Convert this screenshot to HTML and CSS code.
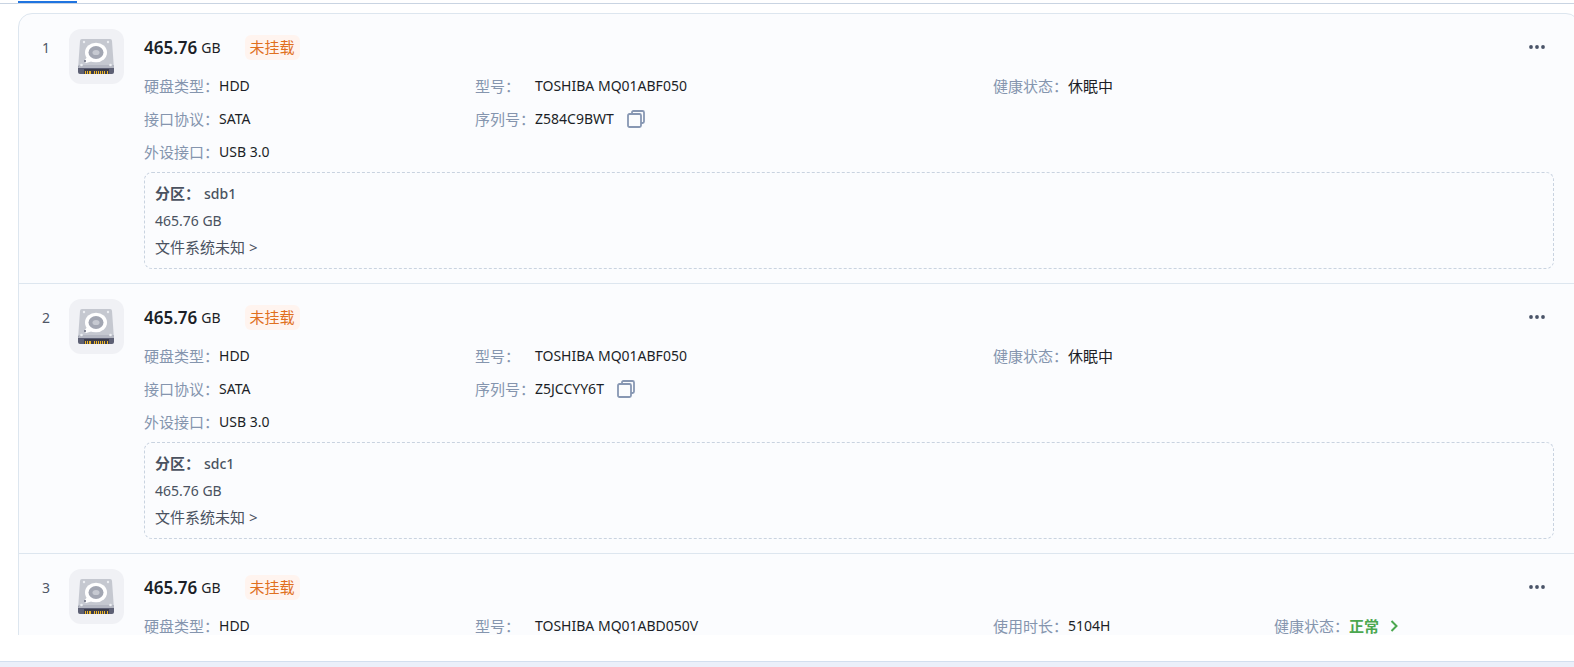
FILE: index.html
```html
<!DOCTYPE html>
<html lang="zh-CN">
<head>
<meta charset="utf-8">
<title>硬盘</title>
<link rel="stylesheet" href="styles.css">
</head>
<body>
<svg class="sprite" aria-hidden="true">
  <symbol id="disk" viewBox="0 0 55 55">
    <path d="M13 10h28q2 0 2 2l2 28H9l2-28q0-2 2-2z" fill="#c5c8d0"/>
    <path d="M9 37l36 0v6q0 2-2 2H11q-2 0-2-2z" fill="#5d6074"/>
    <path d="M9.500 36h35.500l0 3H9z" fill="#b3b6c1"/>
    <path d="M15 40h25v5H15z" fill="#3c3d4b"/>
    <path d="M16.500 42v3M18.500 42v3M20.500 42v3M21.500 42v3M25.500 42v3M27.500 42v3M29.500 42v3M31.500 42v3M33.500 42v3M35.500 42v3M38.500 42v3" stroke="#f0b92c" stroke-width="1"/>
    <path d="M19 27l-4 5 2 2 7-2z" fill="#fff"/>
    <ellipse cx="27" cy="23.500" rx="11" ry="9.800" fill="#fff"/>
    <ellipse cx="27" cy="23.500" rx="7.500" ry="6.500" fill="#a2a6b2"/>
    <ellipse cx="27" cy="23.500" rx="3.500" ry="2.600" fill="#c6c9d1"/>
    <circle cx="16" cy="32" r="1" fill="#5d6074"/>
    <g fill="#eceef2"><circle cx="15" cy="13" r="1.200"/><circle cx="39" cy="13" r="1.200"/><circle cx="12.500" cy="36" r="1.300"/><circle cx="41.500" cy="36" r="1.300"/></g>
  </symbol>
  <symbol id="copy" viewBox="0 0 18 18">
    <path d="M5 4V2.500Q5 1 6.500 1H15.500Q17 1 17 2.500V11.500Q17 13 15.500 13H14" fill="none" stroke="#8797b3" stroke-width="1.800"/>
    <rect x="1" y="4" width="13" height="13" rx="1.500" fill="none" stroke="#8797b3" stroke-width="1.800"/>
  </symbol>
  <symbol id="more" viewBox="0 0 16 4">
    <g fill="#4a5468"><circle cx="2" cy="2" r="1.900"/><circle cx="8" cy="2" r="1.900"/><circle cx="14" cy="2" r="1.900"/></g>
  </symbol>
  <symbol id="chevron" viewBox="0 0 8 12">
    <path d="M1.500 1L6.500 6L1.500 11" fill="none" stroke="#4ba74f" stroke-width="2"/>
  </symbol>
</svg>

<div class="tabs"><span class="tab-active"></span></div>

<main class="viewport">
  <ol class="disk-list">
    <li class="disk">
      <span class="index">1</span>
      <span class="thumb"><svg><use href="#disk"/></svg></span>
      <div class="body">
        <div class="heading"><strong class="size">465.76</strong><span class="unit">GB</span><span class="tag">未挂载</span><button class="more" type="button" aria-label="更多"><svg><use href="#more"/></svg></button></div>
        <div class="specs">
          <dl>
            <div class="spec"><dt>硬盘类型：</dt><dd>HDD</dd></div>
            <div class="spec"><dt>接口协议：</dt><dd>SATA</dd></div>
            <div class="spec"><dt>外设接口：</dt><dd>USB 3.0</dd></div>
          </dl>
          <dl>
            <div class="spec"><dt>型号：</dt><dd>TOSHIBA MQ01ABF050</dd></div>
            <div class="spec"><dt>序列号：</dt><dd>Z584C9BWT</dd><button class="copy" type="button" aria-label="复制"><svg><use href="#copy"/></svg></button></div>
          </dl>
          <dl>
            <div class="spec"><dt>健康状态：</dt><dd class="status">休眠中</dd></div>
          </dl>
        </div>
        <section class="partition">
          <div class="partition-name"><b>分区：</b><span>sdb1</span></div>
          <div class="capacity">465.76 GB</div>
          <a class="fs" href="#">文件系统未知 &gt;</a>
        </section>
      </div>
    </li>
    <li class="disk">
      <span class="index">2</span>
      <span class="thumb"><svg><use href="#disk"/></svg></span>
      <div class="body">
        <div class="heading"><strong class="size">465.76</strong><span class="unit">GB</span><span class="tag">未挂载</span><button class="more" type="button" aria-label="更多"><svg><use href="#more"/></svg></button></div>
        <div class="specs">
          <dl>
            <div class="spec"><dt>硬盘类型：</dt><dd>HDD</dd></div>
            <div class="spec"><dt>接口协议：</dt><dd>SATA</dd></div>
            <div class="spec"><dt>外设接口：</dt><dd>USB 3.0</dd></div>
          </dl>
          <dl>
            <div class="spec"><dt>型号：</dt><dd>TOSHIBA MQ01ABF050</dd></div>
            <div class="spec"><dt>序列号：</dt><dd>Z5JCCYY6T</dd><button class="copy" type="button" aria-label="复制"><svg><use href="#copy"/></svg></button></div>
          </dl>
          <dl>
            <div class="spec"><dt>健康状态：</dt><dd class="status">休眠中</dd></div>
          </dl>
        </div>
        <section class="partition">
          <div class="partition-name"><b>分区：</b><span>sdc1</span></div>
          <div class="capacity">465.76 GB</div>
          <a class="fs" href="#">文件系统未知 &gt;</a>
        </section>
      </div>
    </li>
    <li class="disk">
      <span class="index">3</span>
      <span class="thumb"><svg><use href="#disk"/></svg></span>
      <div class="body">
        <div class="heading"><strong class="size">465.76</strong><span class="unit">GB</span><span class="tag">未挂载</span><button class="more" type="button" aria-label="更多"><svg><use href="#more"/></svg></button></div>
        <div class="specs">
          <dl>
            <div class="spec"><dt>硬盘类型：</dt><dd>HDD</dd></div>
          </dl>
          <dl>
            <div class="spec"><dt>型号：</dt><dd>TOSHIBA MQ01ABD050V</dd></div>
          </dl>
          <dl>
            <div class="spec"><dt>使用时长：</dt><dd>5104H</dd></div>
          </dl>
          <dl>
            <div class="spec"><dt>健康状态：</dt><dd class="status"><a class="healthy" href="#">正常<svg><use href="#chevron"/></svg></a></dd></div>
          </dl>
        </div>
      </div>
    </li>
  </ol>
</main>

<footer class="statusbar"></footer>
</body>
</html>
```
FILE: styles.css
```css
* { box-sizing: border-box; }

body {
  margin: 0;
  height: 100vh;
  display: flex;
  flex-direction: column;
  overflow: hidden;
  background: #fff;
  color: #1b1f27;
  font: 15px/32px "Noto Sans", "Noto Sans CJK SC", sans-serif;
}

.sprite { display: none; }

svg { display: block; }

button {
  padding: 0;
  border: 0;
  background: none;
  cursor: pointer;
}

a { color: inherit; text-decoration: none; }

.tabs {
  flex: none;
  height: 4px;
  padding: 0 18px;
  border-bottom: 1px solid #c9d4e2;
}

.tab-active {
  display: block;
  width: 59px;
  height: 3px;
  border-top: 1px solid #fff;
  background: #1f74e0;
}

.viewport {
  flex: 1;
  min-height: 0;
  margin-bottom: 26px;
  padding: 9px 0 0 18px;
  overflow: hidden;
}

.disk-list {
  margin: 0 -6px 0 0;
  padding: 0;
  list-style: none;
  background: #fbfcfe;
  border: 1px solid #dde6ef;
  border-radius: 14px;
}

.disk {
  display: flex;
  padding: 15px 25px 14px 0;
  border-bottom: 1px solid #dde6ef;
}

.index {
  width: 50px;
  padding-left: 4px;
  line-height: 37px;
  font-size: 14px;
  text-align: center;
  color: #4f5666;
}

.thumb {
  flex: none;
  width: 55px;
  height: 55px;
  margin-right: 20px;
  border-radius: 12px;
  background: #f0f1f5;
}

.thumb svg { width: 55px; height: 55px; }

.body { flex: 1; min-width: 0; }

.heading {
  display: flex;
  align-items: center;
  height: 37px;
  margin-bottom: 3px;
}

.size {
  font-size: 17px;
  font-weight: 600;
}

.unit {
  margin-left: 4px;
  font-size: 14px;
}

.tag {
  margin-left: 24px;
  padding: 0 5px;
  line-height: 25px;
  border-radius: 6px;
  background: #fff4ef;
  color: #e0701f;
}

.more {
  margin: 0 9px 0 auto;
  padding: 6px 0 8px;
}

.more svg { width: 16px; height: 4px; }

.specs {
  display: grid;
  grid-template-columns: 331fr 518fr 281fr 280fr;
}

dl, dd { margin: 0; }

.spec { display: flex; align-items: center; height: 33px; }

dt {
  min-width: 60px;
  color: #8595ae;
}

dd { font-size: 14px; }

.status { font-size: 15px; }

.copy { margin-left: 13px; }

.copy svg { width: 18px; height: 18px; }

.healthy {
  display: flex;
  align-items: center;
  gap: 11px;
  font-weight: 600;
  color: #4ba74f;
}

.healthy svg { width: 8px; height: 12px; }

.partition {
  margin-top: 4px;
  padding: 7px 10px;
  border: 1px dashed #c9d3e0;
  border-radius: 8px;
  line-height: 27px;
  color: #4a5260;
}

.partition-name { display: flex; gap: 4px; }

.partition-name span { font-size: 14px; font-weight: 500; }

.capacity { font-size: 14px; }

.fs { display: block; }

.statusbar {
  flex: none;
  height: 6px;
  border-top: 1px solid #d3dfef;
  background: #ebf0fa;
}
```
